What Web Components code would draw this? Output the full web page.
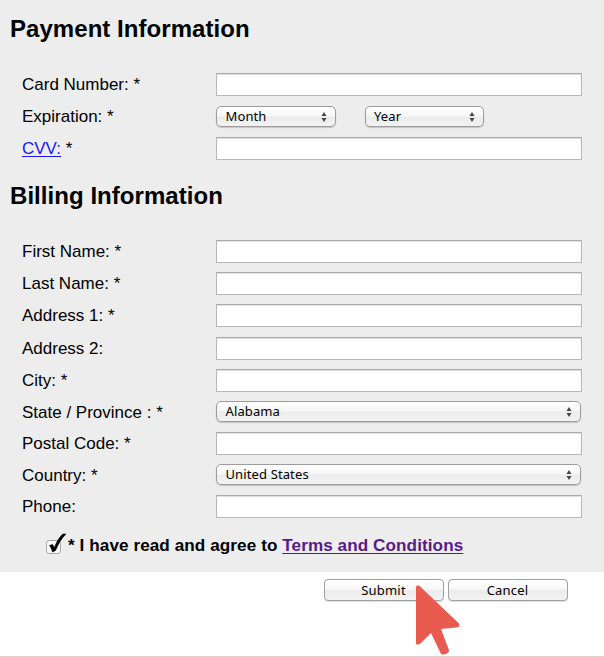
<!DOCTYPE html>
<html lang="en">
<head>
<meta charset="utf-8">
<title>Payment Information</title>
<style>
    html, body { margin: 0; height: 100%; }
    body { background: #fff; overflow: hidden; font-family: "Liberation Sans", Arial, sans-serif; color: #000; }
</style>
</head>
<body>
<payment-page></payment-page>

<template id="section-template">
    <style>
        :host { display: block; }
        h2 { margin: 0 0 0 10px; font-size: 24px; line-height: 28px; font-weight: bold; letter-spacing: .05px; }
        .rows { padding: 25px 22px 0; }
    </style>
    <h2><slot name="title"></slot></h2>
    <div class="rows"><slot></slot></div>
</template>

<template id="row-template">
    <style>
        :host { display: grid; grid-template-columns: 194px 366px; height: 32px; padding-top: 5px; box-sizing: border-box; font-size: 17px; }
        .label { line-height: 20px; padding-top: 2px; white-space: nowrap; }
        .controls { display: flex; align-items: flex-start; gap: 29px; }
    </style>
    <div class="label"><slot name="label"></slot></div>
    <div class="controls"><slot></slot></div>
</template>

<template id="field-template">
    <style>
        :host { display: block; width: 366px; }
        input {
            display: block; box-sizing: border-box; width: 100%; height: 23px; margin: 0; padding: 1px 6px;
            border: 1px solid #b8b8b8; border-top-color: #aaa; border-radius: 0;
            background: #fff; box-shadow: inset 0 1px 1px #ddd; outline: none;
        }
    </style>
    <input type="text">
</template>

<template id="select-template">
    <style>
        :host {
            display: flex; align-items: center; justify-content: space-between;
            box-sizing: border-box; height: 21px; padding: 0 8px 0 8.5px;
            border: 1px solid #9c9c9c; border-radius: 5px; box-shadow: 0 1px 1px #c4c4c4;
            background: linear-gradient(#fff 0, #f6f6f6 48%, #ebebeb 52%, #f3f3f3 100%);
            font: 13px/19px "Noto Sans", sans-serif; letter-spacing: .12px;
        }
        svg { display: block; }
    </style>
    <span><slot></slot></span>
    <svg width="6" height="10" viewBox="0 0 6 10"><path d="M3 0 5.500 4H.5zM3 10 .5 6h5z" fill="#444"/></svg>
</template>

<template id="button-template">
    <style>
        :host { display: block; width: 120px; }
        button {
            display: block; box-sizing: border-box; width: 100%; height: 22px; padding: 1px 1px 0 0;
            border: 1px solid #a0a0a0; border-radius: 4px; box-shadow: 0 1px 1px #ddd;
            background: linear-gradient(#fff 0, #f6f6f6 48%, #ebebeb 52%, #f3f3f3 100%);
            font: 13px/19px "Noto Sans", sans-serif; letter-spacing: .2px; color: #000;
        }
    </style>
    <button type="button"><slot></slot></button>
</template>

<template id="agree-template">
    <style>
        :host { display: flex; align-items: flex-start; padding-left: 46px; font-size: 17.1px; letter-spacing: .09px; line-height: 20px; font-weight: bold; white-space: nowrap; }
        svg { display: block; margin: -2px 2px 0 0; }
        span { padding-top: 1px; }
    </style>
    <svg width="20" height="21" viewBox="0 0 20 21">
        <rect x=".5" y="7.500" width="14" height="13" rx="2.500" fill="#f9f9f9" stroke="#aaa"/>
        <path d="M3.500 12.500 6.500 11.500 8.500 14.500C10.500 9 14 3 17 1L20 1C15.500 5 12 11.500 9.500 17.500L6.500 19C6 17 5 14.500 3.500 12.500Z" fill="#000" stroke="#000" stroke-width=".6"/>
    </svg>
    <span><slot></slot></span>
</template>

<template id="pointer-template">
    <style>
        :host { position: absolute; left: 416px; top: 585px; pointer-events: none; }
        svg { display: block; }
    </style>
    <svg width="45" height="71" viewBox="0 0 45 71">
        <path d="M0 2Q0 0 3 0.500L43 38.500Q45 42 40 42.500L25 44 33 65Q33.500 67 31 68.500L28 69.500Q25.500 70 24.500 68L15 48 5 58Q2 60.500 0 59Z" fill="#ea5b4f"/>
    </svg>
</template>

<template id="page-template">
    <style>
        :host { display: flex; flex-direction: column; position: relative; height: 657px; box-sizing: border-box; border-bottom: 1px solid #d2d2d2; }
        .panel { height: 572px; box-sizing: border-box; padding-top: 15px; background: #ededed; }
        .billing { margin-top: 18px; }
        .short { height: 31px; }
        .tall { height: 33px; }
        agree-line { margin-top: 13px; }
        a { color: #1a1aee; text-decoration-thickness: 1px; text-underline-offset: 2px; }
        a.visited { color: #551a8b; }
        .wide { width: 365px; }
        .small { width: 119.5px; margin-top: 1px; }
        .actions { display: flex; gap: 4px; padding: 7px 0 0 324px; }
    </style>
    <div class="panel">
        <form-section>
            <span slot="title">Payment Information</span>
            <form-row><span slot="label">Card Number: *</span><text-field></text-field></form-row>
            <form-row><span slot="label">Expiration: *</span><select-box class="small">Month</select-box><select-box class="small">Year</select-box></form-row>
            <form-row><span slot="label"><a href="#">CVV:</a> *</span><text-field></text-field></form-row>
        </form-section>
        <form-section class="billing">
            <span slot="title">Billing Information</span>
            <form-row><span slot="label">First Name: *</span><text-field></text-field></form-row>
            <form-row><span slot="label">Last Name: *</span><text-field></text-field></form-row>
            <form-row class="tall"><span slot="label">Address 1: *</span><text-field></text-field></form-row>
            <form-row><span slot="label">Address 2:</span><text-field></text-field></form-row>
            <form-row><span slot="label">City: *</span><text-field></text-field></form-row>
            <form-row class="short"><span slot="label">State / Province : *</span><select-box class="wide">Alabama</select-box></form-row>
            <form-row><span slot="label">Postal Code: *</span><text-field></text-field></form-row>
            <form-row class="short"><span slot="label">Country: *</span><select-box class="wide">United States</select-box></form-row>
            <form-row><span slot="label">Phone:</span><text-field></text-field></form-row>
        </form-section>
        <agree-line>* I have read and agree to <a class="visited" href="#">Terms and Conditions</a></agree-line>
    </div>
    <div class="actions">
        <push-button>Submit</push-button>
        <push-button>Cancel</push-button>
    </div>
    <red-pointer></red-pointer>
</template>

<script>
    class TemplateElement extends HTMLElement {
        constructor() {
            super();
            const template = document.getElementById(this.constructor.templateId);
            this.attachShadow({mode: 'open'}).appendChild(template.content.cloneNode(true));
        }
    }

    class FormSection extends TemplateElement { static templateId = 'section-template'; }
    class FormRow extends TemplateElement { static templateId = 'row-template'; }
    class TextField extends TemplateElement { static templateId = 'field-template'; }
    class SelectBox extends TemplateElement { static templateId = 'select-template'; }
    class PushButton extends TemplateElement { static templateId = 'button-template'; }
    class AgreeLine extends TemplateElement { static templateId = 'agree-template'; }
    class RedPointer extends TemplateElement { static templateId = 'pointer-template'; }
    class PaymentPage extends TemplateElement { static templateId = 'page-template'; }

    customElements.define('form-section', FormSection);
    customElements.define('form-row', FormRow);
    customElements.define('text-field', TextField);
    customElements.define('select-box', SelectBox);
    customElements.define('push-button', PushButton);
    customElements.define('agree-line', AgreeLine);
    customElements.define('red-pointer', RedPointer);
    customElements.define('payment-page', PaymentPage);
</script>
</body>
</html>
